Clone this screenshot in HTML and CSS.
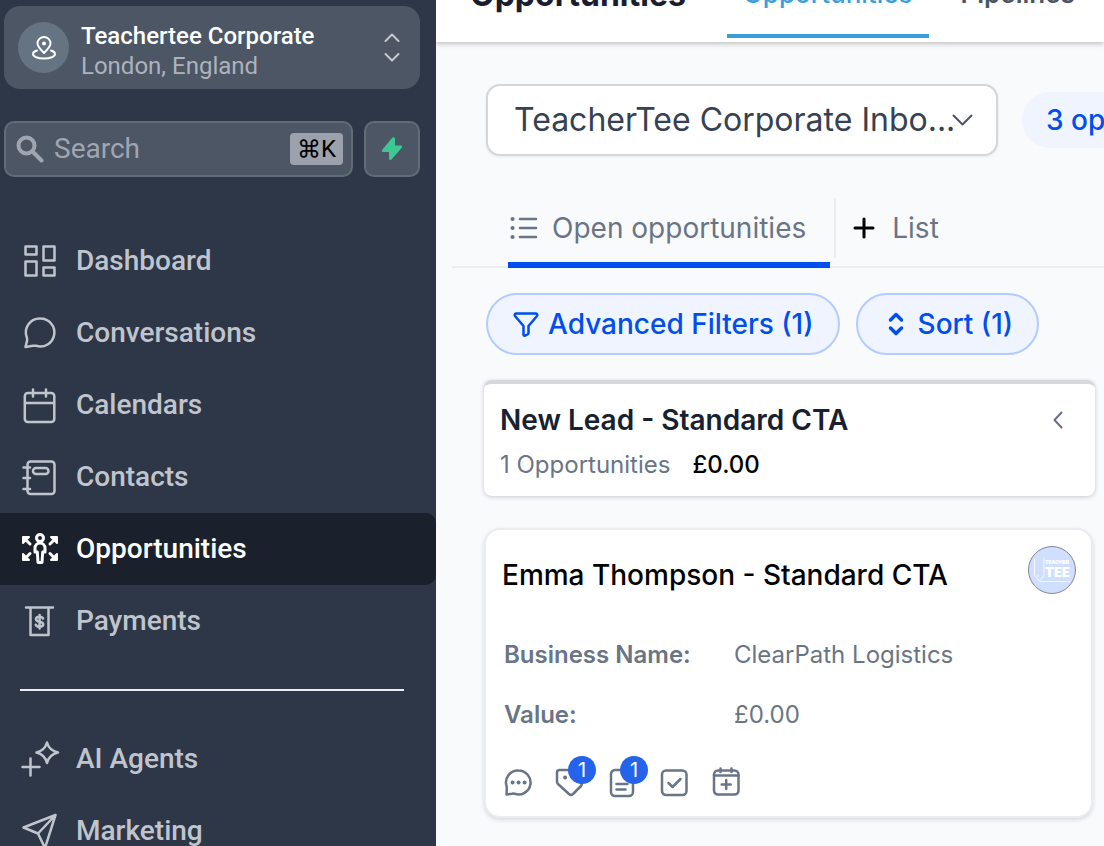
FILE: index.html
```html
<!DOCTYPE html>
<html lang="en">
<head>
<meta charset="utf-8">
<meta name="viewport" content="width=device-width, initial-scale=1">
<title>Opportunities</title>
<link rel="stylesheet" href="styles.css">
</head>
<body>
<div class="app">
  <aside class="sidebar">
    <button class="account" type="button">
      <span class="account-pin">
        <svg width="26" height="26" viewBox="0 0 26 26" class="line"><path d="M13 18C9 14 6.500 11.500 6.500 8.500a6.500 6.500 0 0 1 13 0C19.500 11.500 17 14 13 18z"/><circle cx="13" cy="8.500" r="1"/><path d="M6 15.500C3.500 16.300 2 17.500 2 19c0 2.600 4.800 4.500 11 4.500S24 21.600 24 19c0-1.500-1.500-2.700-4-3.500"/></svg>
      </span>
      <span class="account-text">
        <span class="account-name">Teachertee Corporate</span>
        <span class="account-place">London, England</span>
      </span>
      <svg class="account-arrows line" width="20" height="32" viewBox="0 0 20 32"><path d="m3.500 9 6.500-6.500L16.500 9M3.500 22l6.500 6.500 6.500-6.500"/></svg>
    </button>

    <div class="search-row">
      <label class="search">
        <svg width="28" height="28" viewBox="0 0 28 28" class="search-icon"><circle cx="10.500" cy="10.500" r="8"/><path d="m16.500 16.500 9 9"/></svg>
        <input type="text" placeholder="Search" aria-label="Search">
        <kbd>⌘K</kbd>
      </label>
      <button class="bolt" type="button" aria-label="Quick actions">
        <svg width="24" height="26" viewBox="0 0 24 26"><path d="M12.500 1.500 2 14q-.8 2 1 2h6v6.500q.5 2.500 2.500 1L22 11.500q.8-2-1-2h-6V2.500q-.8-2-2.500-1z"/></svg>
      </button>
    </div>

    <nav class="menu">
      <a class="item" href="#"><svg width="40" height="40" viewBox="0 0 40 40"><path d="M5.500 5.500h11v8h-11zM23.500 5.500h11v14h-11zM5.500 20.500h11v14h-11zM23.500 26.500h11v8h-11z"/></svg><span>Dashboard</span></a>
      <a class="item" href="#"><svg width="40" height="40" viewBox="0 0 40 40"><path d="M20.500 5.500a14 14 0 1 1-4.500 27.300c-1-.3-1.800-.2-3 0L5.500 34l1.600-6.500c.3-1 .1-1.700-.3-3A14 14 0 0 1 20.500 5.500z"/></svg><span>Conversations</span></a>
      <a class="item" href="#"><svg width="40" height="40" viewBox="0 0 40 40"><rect x="4.800" y="8" width="29.500" height="29" rx="3"/><path d="M5 18h29M13 4.500v7M26 4.500v7"/></svg><span>Calendars</span></a>
      <a class="item" href="#"><svg width="40" height="40" viewBox="0 0 40 40"><rect x="7.500" y="4.500" width="27" height="32.500" rx="3"/><path d="M3.500 10.500H10M3.500 21H10M3.500 32H10"/><rect x="13" y="11" width="15.500" height="6" rx="3"/></svg><span>Contacts</span></a>
      <a class="item active" href="#" aria-current="page"><svg width="40" height="40" viewBox="0 0 40 40"><circle cx="20" cy="9" r="3.500"/><path d="M17.300 23H15v-4a5 5 0 0 1 10 0v4h-2.300L22 33.500h-4L17.300 23zM10 15 4.500 9.500M30 15l5.500-5.500M10 24.500 4.500 30M30 24.500l5.500 5.500"/><path class="solid" d="M3 8h6l-6 6zM37 8h-6l6 6zM3 31h6l-6-6zM37 31h-6l6-6z"/></svg><span>Opportunities</span></a>
      <a class="item" href="#"><svg width="40" height="40" viewBox="0 0 40 40"><path d="M6 6.500h27M10.500 7v27h18V7"/><path d="M23 17.500c-.5-1.300-1.700-1.800-3.500-1.800-2 0-3.500 1-3.500 2.500 0 3.600 7.200 1.600 7.200 5 0 1.500-1.600 2.500-3.700 2.500-1.900 0-3.200-.7-3.700-2M19.600 14v13.500"/></svg><span>Payments</span></a>
      <hr>
      <a class="item" href="#"><svg width="40" height="40" viewBox="0 0 40 40"><path d="M27 3.500c1.500 5.500 4.500 8.500 11 10-6.500 1.500-9.500 4.500-11 10.500-1.500-6-4.500-9-10.500-10.500 6-1.500 9-4.500 10.500-10zM10.500 19.500v17M2.500 28h17"/></svg><span>AI Agents</span></a>
      <a class="item" href="#"><svg width="40" height="40" viewBox="0 0 40 40"><path d="M35.500 4 3.500 16.500l14.500 6L25 37zM35.500 4 18 22.500"/></svg><span>Marketing</span></a>
    </nav>
  </aside>

  <main class="main">
    <header class="topbar">
      <h1>Opportunities</h1>
      <nav class="top-tabs">
        <a class="current" href="#">Opportunities</a>
        <a href="#">Pipelines</a>
      </nav>
    </header>

    <div class="pipeline-row">
      <div class="select-wrap">
        <select aria-label="Pipeline"><option>TeacherTee Corporate Inbo...</option></select>
        <svg width="22" height="14" viewBox="0 0 22 14"><path d="m1.500 2.500 9 9 9-9"/></svg>
      </div>
      <span class="count">3 opportunities</span>
    </div>

    <div class="views">
      <button class="view selected" type="button"><svg width="32" height="28" viewBox="0 0 32 28" class="list-icon"><path d="M12 5h16M12 14h16M12 23h16"/><path class="dots" d="M4.500 5h.1M4.500 14h.1M4.500 23h.1"/></svg>Open opportunities</button>
      <button class="view add" type="button"><svg width="24" height="24" viewBox="0 0 24 24"><path d="M12 3v18M3 12h18"/></svg>List</button>
    </div>

    <div class="filters">
      <button class="pill" type="button"><svg width="28" height="28" viewBox="0 0 28 28"><path d="M4 3.500h20q2 .7 1 2.500L16.500 16v7q0 1-1 1.500l-2.500 1.200q-1.500.3-1.500-1.200V16L3 6Q2 4.200 4 3.500z"/></svg>Advanced Filters (1)</button>
      <button class="pill sort" type="button"><svg width="18" height="26" viewBox="0 0 18 26"><path d="m3.500 9 5.500-5.500L14.500 9M3.500 17l5.500 5.500 5.500-5.500"/></svg>Sort (1)</button>
    </div>

    <section class="stage">
      <div class="stage-head">
        <h2>New Lead - Standard CTA</h2>
        <button type="button" aria-label="Collapse"><svg width="14" height="20" viewBox="0 0 14 20"><path d="m10.500 2.500-7 7.500 7 7.500"/></svg></button>
      </div>
      <p class="stage-meta"><span>1 Opportunities</span><strong>£0.00</strong></p>
    </section>

    <article class="card">
      <div class="card-head">
        <h3>Emma Thompson - Standard CTA</h3>
        <svg class="avatar" width="48" height="48" viewBox="0 0 48 48" role="img" aria-label="Teacher Tee"><circle cx="24" cy="24" r="23.500"/><path d="M6.500 13v16l5 6.500 4.500-6.500V12M10 29v1.500M12 35.500h30"/><text class="small" x="17" y="18">TEACHER</text><text class="big" x="17" y="31">TEE</text></svg>
      </div>
      <dl class="fields">
        <dt>Business Name:</dt><dd>ClearPath Logistics</dd>
        <dt>Value:</dt><dd>£0.00</dd>
      </dl>
      <div class="actions">
        <button type="button" aria-label="Conversation"><svg width="32" height="32" viewBox="0 0 32 32"><path d="M16.500 4.500a12 12 0 1 1-4 23.300c-1-.3-1.500-.3-2.500-.1l-5.500.8.300-6c.1-.8 0-1.300-.2-2.200A12 12 0 0 1 16.500 4.500z"/><path class="dots" d="M10.500 16.500h.1M16.500 16.500h.1M22.500 16.500h.1"/></svg></button>
        <button type="button" aria-label="Tags"><svg width="32" height="32" viewBox="0 0 32 32"><path d="M3 6.500Q3 4 5.500 4H15l12 12q1.500 2 0 4l-8 8q-2 1.700-4 0L4 18q-1-1-1-2.500z"/><path class="dots" d="M11 11.500h.1"/></svg><span class="badge">1</span></button>
        <button type="button" aria-label="Notes"><svg width="32" height="32" viewBox="0 0 32 32"><rect x="5" y="4" width="22" height="26" rx="4"/><path d="M10.500 18h11M10.500 23.500h9"/></svg><span class="badge">1</span></button>
        <button type="button" aria-label="Tasks"><svg width="32" height="32" viewBox="0 0 32 32"><rect x="4" y="4.500" width="24.500" height="24.500" rx="4"/><path d="m10.500 17 4 4 8-8"/></svg></button>
        <button type="button" aria-label="Appointment"><svg width="32" height="32" viewBox="0 0 32 32"><rect x="4" y="4.500" width="24.500" height="24" rx="4"/><path d="M4 9.500h24.500M10.500 2.500V6M21.500 2.500V6M16.200 14v9M11.700 18.500h9"/></svg></button>
      </div>
    </article>
  </main>
</div>
</body>
</html>
```
FILE: styles.css
```css
* { box-sizing: border-box; }
body { margin: 0; font-family: Inter, sans-serif; background: #f9fafc; }
button { font: inherit; color: inherit; background: none; border: 0; padding: 0; cursor: pointer; }
h1, h2, h3, p, dl, dd { margin: 0; }
a { text-decoration: none; color: inherit; }
svg { fill: none; stroke: currentColor; stroke-width: 2; stroke-linecap: round; stroke-linejoin: round; flex: none; }

.app { display: grid; grid-template-columns: 436px minmax(0, 1fr); height: 100vh; overflow: hidden; }

/* Sidebar */
.sidebar { background: #2d3748; color: #c0c5cd; font-family: Roboto, sans-serif; padding-top: 6px; overflow: hidden; }
.account { display: flex; align-items: center; gap: 12px; width: calc(100% - 20px); height: 83px; margin-left: 4px; padding: 0 18px 0 14px; border-radius: 16px; background: #4c5665; text-align: left; }
.account-pin { display: grid; place-items: center; width: 51px; height: 51px; border-radius: 50%; background: #667382; color: #fff; }
.account-text { flex: 1; display: grid; font-size: 24px; line-height: 30px; padding-top: 6px; }
.account-name { color: #fff; font-weight: 500; }
.account-place { color: #adb3bc; }
.account-arrows { color: #c5c9d0; }

.search-row { display: flex; gap: 11px; margin: 32px 16px 0 4px; }
.search { flex: 1; min-width: 0; display: flex; align-items: center; gap: 10px; height: 56px; padding: 0 8px 0 10px; border: 2px solid #616c78; border-radius: 10px; background: #4c5665; }
.search-icon { color: #a0a6b1; stroke-width: 4; }
.search input { flex: 1; min-width: 0; padding: 0; border: 0; outline: 0; background: none; font: 400 28px/36px Roboto, sans-serif; color: #fff; }
.search input::placeholder { color: #a0a6b1; opacity: 1; }
kbd { width: 53px; height: 32px; border-radius: 4px; background: #9ba2ae; color: #000; font: 400 24px/32px Roboto, Inter, sans-serif; text-align: center; }
.bolt { display: grid; place-items: center; width: 56px; height: 56px; border: 2px solid #616c78; border-radius: 10px; background: #4c5665; }
.bolt svg { fill: #3cc795; stroke: none; }

.menu { margin-top: 48px; }
.item { display: flex; align-items: center; gap: 16px; height: 72px; padding-left: 20px; font-size: 28px; font-weight: 500; }
.item span { padding-bottom: 2px; }
.item svg { stroke-width: 2.5; }
.item .solid { fill: currentColor; stroke-width: 2; }
.item.active { background: #1a202c; color: #fff; border-radius: 0 10px 10px 0; }
.item.active svg { stroke-width: 3; }
.menu hr { height: 2px; margin: 32px 32px 32px 20px; border: 0; background: #eceef0; }

/* Main */
.main { overflow: hidden; color: #181d2f; }
.topbar { display: flex; align-items: flex-end; gap: 41px; height: 42px; padding-left: 34px; overflow: hidden; background: #fff; box-shadow: 0 2px 5px #0000003a; }
.topbar h1 { font-size: 32px; line-height: 40px; font-weight: 700; padding-bottom: 27px; }
.top-tabs { display: flex; gap: 16px; font-size: 26px; line-height: 32px; font-weight: 600; color: #4b5565; }
.top-tabs a { padding: 0 16px 22px; border-bottom: 4px solid transparent; margin-bottom: 4px; }
.top-tabs .current { padding-bottom: 24px; color: #389fdb; border-color: #389fdb; font-weight: 500; align-self: flex-end; }

.pipeline-row { display: flex; align-items: center; gap: 24px; margin: 42px 0 0 50px; }
.select-wrap { position: relative; flex: 0 0 512px; }
.select-wrap select { display: block; width: 100%; height: 72px; padding: 0 24px 0 26px; appearance: none; border: 2px solid #d4d6da; border-radius: 14px; background: #fff; box-shadow: 0 1px 3px #10182814; font: 400 32px/40px Inter, sans-serif; color: #364152; }
.select-wrap svg { position: absolute; right: 24px; top: 29px; color: #4b5565; pointer-events: none; }
.count { flex: none; padding: 10px 24px; border-radius: 28px; background: #eff4ff; color: #004eeb; font-size: 28px; line-height: 36px; font-weight: 500; white-space: nowrap; }

.views { display: flex; align-items: flex-start; margin: 42px 0 0 16px; padding-left: 56px; border-bottom: 2px solid #eaecee; font-size: 28px; color: #697586; height: 70px; }
.view { display: flex; align-items: center; height: 60px; white-space: nowrap; }
.selected { gap: 12px; height: 70px; padding: 0 24px 4px 0; border-bottom: 6px solid #004eeb; }
.list-icon { stroke-width: 2.5; }
.list-icon .dots { stroke-width: 4; }
.add { gap: 16px; margin-left: 4px; padding-left: 16px; border-left: 2px solid #eaecee; }
.add svg { color: #000; stroke-width: 3; }

.filters { display: flex; gap: 16px; margin: 25px 0 0 50px; }
.pill { display: flex; align-items: center; gap: 8px; height: 62px; padding: 0 24px; border: 2px solid #b2ccff; border-radius: 31px; background: #eff4ff; color: #004eeb; font-size: 28px; font-weight: 500; white-space: nowrap; }
.pill svg { stroke-width: 2.5; }
.sort { gap: 13px; padding-left: 29px; }
.pill.sort svg { stroke-width: 3.5; }

.stage { margin: 25px 9px 0 48px; padding: 18px 28px 12px 16px; border-top: 4px solid #d5d9dd; border-radius: 8px; background: #fff; box-shadow: 0 1px 4px #10182838; }
.stage-head { display: flex; align-items: center; justify-content: space-between; }
.stage h2 { font-size: 28px; line-height: 36px; font-weight: 600; color: #18212f; }
.stage-head button { display: grid; color: #667085; }
.stage-head svg { margin-right: 2px; }
.stage-meta { display: flex; gap: 22px; padding: 13px 0 5px; font-size: 24px; line-height: 28px; color: #697586; }
.stage-meta strong { color: #000; font-weight: 500; }

.card { margin: 32px 11px 0 48px; padding: 16px 16px 18px; border: 2px solid #eaecef; border-radius: 16px; background: #fff; box-shadow: 0 2px 4px #10182824; }
.card-head { display: flex; align-items: center; justify-content: space-between; margin-right: -1px; }
.card h3 { font-size: 28px; line-height: 36px; font-weight: 500; color: #000; padding-top: 10px; }
.avatar circle { fill: #d1dffe; stroke: #808795; stroke-width: 1; }
.avatar path { stroke: #f5f8ff; stroke-width: 1; }
.avatar text { fill: #fff; stroke: none; font-family: Inter, sans-serif; font-weight: 900; }
.avatar .small { font-size: 5px; }
.avatar .big { font-size: 13px; }
.fields { display: grid; grid-template-columns: 230px 1fr; row-gap: 24px; margin-top: 43px; padding-left: 2px; font-size: 24px; line-height: 36px; color: #697586; }
.fields dt { font-weight: 600; }
.actions { display: flex; gap: 20px; margin-top: 33px; color: #697586; }
.actions button { position: relative; display: grid; }
.actions svg { stroke-width: 2.5; }
.actions .dots { stroke-width: 4; }
.badge { position: absolute; left: 14px; top: -10px; width: 28px; height: 28px; border-radius: 50%; background: #2563eb; color: #fff; font-size: 20px; line-height: 28px; text-align: center; }
```
